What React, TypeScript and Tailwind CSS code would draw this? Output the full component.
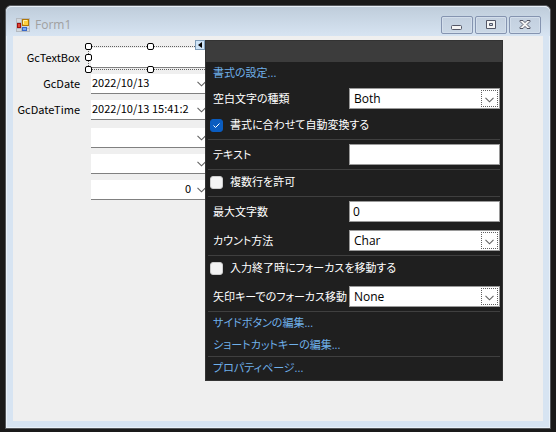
import type { ReactNode } from "react";

const dateFields = [
  { id: "gcDate", label: "GcDate", value: "2022/10/13" },
  { id: "gcDateTime", label: "GcDateTime", value: "2022/10/13 15:41:2" },
];

const blankFields = [
  { id: "combo1", value: "" },
  { id: "combo2", value: "" },
  { id: "number", value: "0" },
];

const Chevron = () => (
  <svg width="9" height="6" viewBox="0 0 9 6" fill="none" stroke="#606060" strokeWidth="1.1">
    <path d="M0.5 0.8 L4.5 4.8 L8.5 0.8" />
  </svg>
);

const FormIcon = () => (
  <svg width="14" height="14" viewBox="0 0 14 14">
    <rect x="0.5" y="0.5" width="13" height="13" fill="#d3d7dc" stroke="#b4b9bf" />
    <path d="M1 4.5H6M5.5 1V13M1 10.5H13" stroke="#b4b9bf" />
    <rect x="6.5" y="1.5" width="6" height="6" fill="#ffd03c" stroke="#b07808" />
    <path d="M7.5 6V2.5H11" stroke="#fff0a8" fill="none" />
    <rect x="1.5" y="5.5" width="3" height="4" fill="#e04436" stroke="#a01010" />
    <rect x="6.5" y="9.5" width="4" height="3" fill="#76a8f4" stroke="#3868c8" />
  </svg>
);

const CaptionButton = ({ label, children }: { label: string; children: ReactNode }) => (
  <button
    type="button"
    aria-label={label}
    className="flex h-[18px] w-8 items-center justify-center rounded-[2px] border border-[#8594b0] bg-gradient-to-b from-[#c3d0df] to-[#cbd8e6] shadow-[inset_0_0_0_1px_#d3deeb]"
  >
    {children}
  </button>
);

const FormField = ({ id, label, value }: { id: string; label?: string; value: string }) => (
  <div className="flex h-5 items-center gap-[11px]">
    <label htmlFor={id} className="w-[67px] shrink-0 pb-0.5 text-right">
      {label}
    </label>
    <div className="flex h-5 w-[120px] items-center border-b border-[#808080] bg-white">
      <input
        id={id}
        aria-label={label ?? id}
        defaultValue={value}
        className={`h-full w-[102px] bg-transparent pb-1 pl-px outline-none ${label ? "" : "pr-0.5 text-right"}`}
      />
      <button type="button" aria-label="Open" className="flex w-4 justify-center">
        <Chevron />
      </button>
    </div>
  </div>
);

const Handle = ({ className }: { className: string }) => (
  <span className={`absolute size-[7px] rounded-[2px] border border-black bg-white ${className}`} />
);

const Row = ({ id, label, children }: { id: string; label: string; children: ReactNode }) => (
  <div className="flex h-[29px] items-center justify-between pl-[5px]">
    <label htmlFor={id} className="whitespace-nowrap">
      {label}
    </label>
    {children}
  </div>
);

const TextBox = ({ id, value }: { id: string; value: string }) => (
  <input
    id={id}
    defaultValue={value}
    className="h-[21px] w-[151px] border border-[#9a9a9a] bg-white px-[3px] text-[12px] text-black outline-none"
  />
);

const DropDown = ({ id, options }: { id: string; options: string[] }) => (
  <div className="relative">
    <select
      id={id}
      className="block h-[21px] w-[151px] appearance-none border border-[#9a9a9a] bg-white px-1 text-[12px] text-black outline-none"
    >
      {options.map((option) => (
        <option key={option}>{option}</option>
      ))}
    </select>
    <span className="pointer-events-none absolute top-0.5 right-0.5 flex h-[17px] w-[17px] items-center justify-center border border-dotted border-[#606060] bg-white pt-0.5">
      <Chevron />
    </span>
  </div>
);

const CheckRow = ({ label, checked }: { label: string; checked?: boolean }) => (
  <label className="flex h-[26px] items-center gap-[7px] pb-0.5 pl-0.5 whitespace-nowrap">
    <span className="relative flex size-[13px]">
      <input
        type="checkbox"
        defaultChecked={checked}
        className="peer size-[13px] appearance-none rounded-[3px] border border-[#cccccc] bg-[#f3f3f3] checked:border-[#0a5cc0] checked:bg-[#0a5cc0]"
      />
      <svg
        className="pointer-events-none absolute inset-0 hidden peer-checked:block"
        width="13"
        height="13"
        viewBox="0 0 13 13"
        fill="none"
        stroke="#ffffff"
      >
        <path d="M3.5 6.5 L5.5 8.5 L9.5 4.5" />
      </svg>
    </span>
    {label}
  </label>
);

const PanelLink = ({ children }: { children: ReactNode }) => (
  <a href="#" className="block h-[22px] pl-[5px] leading-[22px] text-[#6fb0ea]">
    {children}
  </a>
);

const Separator = () => <hr className="border-t border-[#3f3f3f]" />;

// Smart tag panel that opens beside the selected control
const TaskPanel = () => (
  <section className="absolute top-1 left-48 w-[298px] border border-[#333333] bg-[#1f1f1f] font-['Open_Sans','Noto_Sans_CJK_JP',sans-serif] text-[11px] leading-4 text-white [font-feature-settings:'palt']">
    <div className="h-[21px] bg-[#3c3c3c]" />
    <div className="pr-0.5 pb-px pl-0.5">
      <PanelLink>書式の設定...</PanelLink>
      <Row id="space" label="空白文字の種類">
        <DropDown id="space" options={["Both", "None"]} />
      </Row>
      <CheckRow label="書式に合わせて自動変換する" checked />
      <Separator />
      <Row id="text" label="テキスト">
        <TextBox id="text" value="" />
      </Row>
      <Separator />
      <CheckRow label="複数行を許可" />
      <Separator />
      <Row id="max" label="最大文字数">
        <TextBox id="max" value="0" />
      </Row>
      <Row id="count" label="カウント方法">
        <DropDown id="count" options={["Char", "Byte"]} />
      </Row>
      <Separator />
      <CheckRow label="入力終了時にフォーカスを移動する" />
      <Row id="arrow" label="矢印キーでのフォーカス移動">
        <DropDown id="arrow" options={["None", "Both"]} />
      </Row>
      <Separator />
      <PanelLink>サイドボタンの編集...</PanelLink>
      <PanelLink>ショートカットキーの編集...</PanelLink>
      <Separator />
      <PanelLink>プロパティページ...</PanelLink>
    </div>
  </section>
);

export default function App() {
  return (
    <div className="flex min-h-screen flex-col bg-[#1a1a1a] px-[5px] pt-[5px] pb-[3px]">
      <main className="flex flex-1 flex-col rounded-t-md border border-[#55585c] bg-[#d7e4f2] px-[7px] pb-[7px] shadow-[inset_0_0_0_1px_#e9f1f9]">
        <header className="-mx-[7px] flex h-[30px] items-center justify-between rounded-t-md border-t border-[#e9f1f9] bg-gradient-to-b from-[#bfcddb] to-[#d7e4f2] pr-[9px] pl-2.5">
          <div className="flex items-center gap-[5px] pt-1.5">
            <FormIcon />
            <h1 className="font-['Open_Sans',sans-serif] text-[12px] leading-4 text-[#a0a0a0]">Form1</h1>
          </div>
          <div className="flex gap-0.5 pt-1.5">
            <CaptionButton label="Minimize">
              <svg width="12" height="12" viewBox="0 0 12 12">
                <rect x="0.5" y="6.5" width="10" height="4" rx="1" fill="#f4f4f4" stroke="#535666" />
              </svg>
            </CaptionButton>
            <CaptionButton label="Maximize">
              <svg width="12" height="10" viewBox="0 0 12 10">
                <path
                  d="M1.5 0.5H10.5V8.5H1.5ZM4.5 3.5V5.5H7.5V3.5Z"
                  fill="#f4f4f4"
                  fillRule="evenodd"
                  stroke="#535666"
                />
              </svg>
            </CaptionButton>
            <CaptionButton label="Close">
              <svg width="12" height="10" viewBox="0 0 12 10">
                <path
                  d="M1 0.5H4L6 2.6L8 0.5H11V1.5L8 4.5L11 7.5V8.5H8L6 6.4L4 8.5H1V7.5L4 4.5L1 1.5Z"
                  fill="#f4f4f4"
                  stroke="#535666"
                />
              </svg>
            </CaptionButton>
          </div>
        </header>

        <div className="relative flex-1 bg-[#efefef] pt-3 font-['Noto_Sans_CJK_JP',sans-serif] text-[11px] leading-4 text-black">
          <div className="flex flex-col gap-2">
            <div className="flex flex-col gap-1.5">
              <div className="flex h-5 items-center gap-[11px]">
                <label htmlFor="gcTextBox" className="w-[67px] pb-0.5 text-right">
                  GcTextBox
                </label>
                <div className="relative h-5 w-[120px]">
                  <input id="gcTextBox" className="block h-5 w-full border-b border-[#808080] bg-white outline-none" />
                  <div className="absolute -top-0.5 -right-1 -bottom-0.5 -left-[3px] border border-dotted border-[#606060]" />
                  <Handle className="-top-[5px] -left-1.5" />
                  <Handle className="-top-[5px] left-14" />
                  <Handle className="top-1.5 -left-1.5" />
                  <Handle className="-bottom-[5px] -left-1.5" />
                  <Handle className="-bottom-[5px] left-14" />
                </div>
              </div>
              {dateFields.map((field) => (
                <FormField key={field.id} {...field} />
              ))}
            </div>
            <div className="flex flex-col gap-1.5">
              {blankFields.map((field) => (
                <FormField key={field.id} {...field} />
              ))}
            </div>
          </div>

          <button
            type="button"
            aria-label="Tasks"
            className="absolute top-1 left-[182px] flex size-2.5 items-center justify-center border border-[#7f9db9] bg-[#cfe4f7]"
          >
            <svg width="4" height="6" viewBox="0 0 4 6">
              <path d="M4 0V6L0 3Z" fill="#000000" />
            </svg>
          </button>
          <TaskPanel />
        </div>
      </main>
    </div>
  );
}
